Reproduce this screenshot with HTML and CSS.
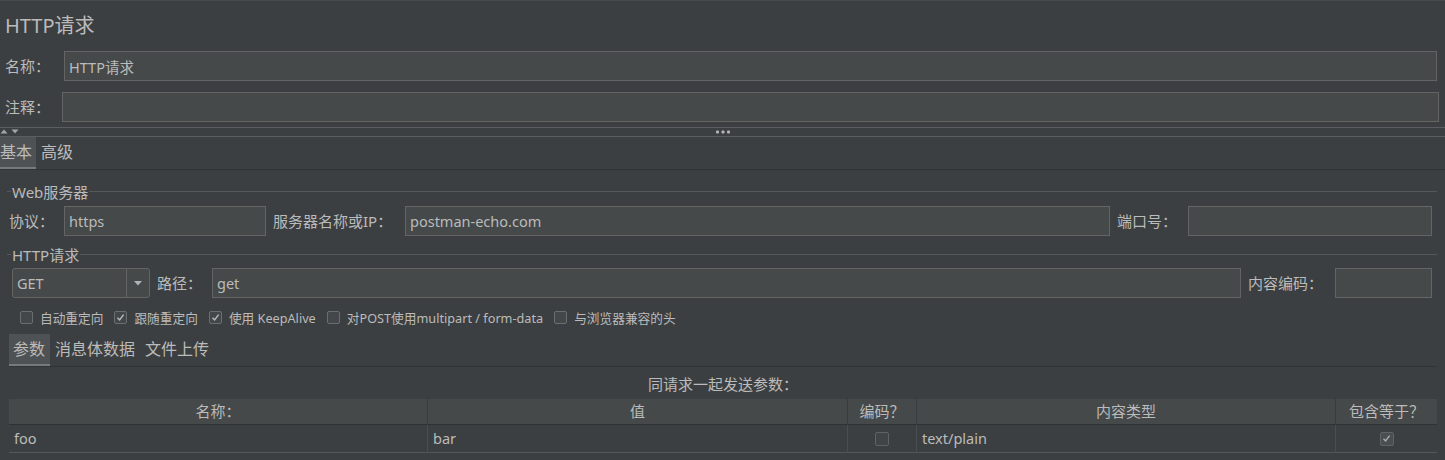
FILE: index.html
```html
<!DOCTYPE html>
<html lang="zh-CN">
<head>
<meta charset="utf-8">
<title>HTTP请求</title>
<link rel="stylesheet" href="styles.css">
</head>
<body>
<div class="app">
  <div class="title">HTTP请求</div>

  <div class="row row-name">
    <label class="lbl lbl-name">名称：</label>
    <input class="field" type="text" value="HTTP请求">
  </div>
  <div class="row row-comment">
    <label class="lbl lbl-comment">注释：</label>
    <input class="field" type="text" value="">
  </div>

  <div class="splitter">
    <svg class="split-arrows" width="20" height="8" viewBox="0 0 20 8">
      <polygon points="0.5,5.5 7.5,5.5 4,1.5" fill="#a3a6a8"/>
      <polygon points="11.5,1.5 18.5,1.5 15,5.5" fill="#a3a6a8"/>
    </svg>
    <svg class="split-dots" width="14" height="4" viewBox="0 0 14 4">
      <rect x="0" y="0.5" width="3" height="3" rx="1" fill="#b4b6b8"/>
      <rect x="5.5" y="0.5" width="3" height="3" rx="1" fill="#b4b6b8"/>
      <rect x="11" y="0.5" width="3" height="3" rx="1" fill="#b4b6b8"/>
    </svg>
    <span></span>
  </div>

  <div class="tabs tabs-main">
    <div class="tab active">基本</div>
    <div class="tab">高级</div>
  </div>

  <div class="group">
    <div class="group-title"><span>Web服务器</span></div>
    <div class="grid-row server-row">
      <label class="lbl">协议：</label>
      <input class="field" type="text" value="https">
      <label class="lbl lbl-pad">服务器名称或IP：</label>
      <input class="field" type="text" value="postman-echo.com">
      <label class="lbl lbl-pad">端口号：</label>
      <input class="field" type="text" value="">
    </div>

    <div class="group-title group-title-2"><span>HTTP请求</span></div>
    <div class="grid-row request-row">
      <div class="combo">
        <span class="combo-value">GET</span>
        <span class="combo-btn">
          <svg width="8" height="5" viewBox="0 0 8 5"><polygon points="0,0 8,0 4,4.5" fill="#b0b3b5"/></svg>
        </span>
      </div>
      <label class="lbl lbl-pad">路径：</label>
      <input class="field" type="text" value="get">
      <label class="lbl lbl-pad">内容编码：</label>
      <input class="field" type="text" value="">
    </div>

    <div class="checks">
      <div class="check-item"><span class="cb"></span><span>自动重定向</span></div>
      <div class="check-item"><span class="cb checked"><svg width="11" height="11" viewBox="0 0 11 11"><path d="M2.5 5.8 L4.6 8 L8.6 2.6" fill="none" stroke="#b9bbbd" stroke-width="1.4"/></svg></span><span>跟随重定向</span></div>
      <div class="check-item"><span class="cb checked"><svg width="11" height="11" viewBox="0 0 11 11"><path d="M2.5 5.8 L4.6 8 L8.6 2.6" fill="none" stroke="#b9bbbd" stroke-width="1.4"/></svg></span><span>使用 KeepAlive</span></div>
      <div class="check-item"><span class="cb"></span><span>对POST使用multipart / form-data</span></div>
      <div class="check-item"><span class="cb"></span><span>与浏览器兼容的头</span></div>
    </div>
  </div>

  <div class="params">
    <div class="tabs tabs-sub">
      <div class="tab active">参数</div>
      <div class="tab">消息体数据</div>
      <div class="tab">文件上传</div>
    </div>
    <div class="caption">同请求一起发送参数：</div>
    <div class="table">
      <div class="th">名称：</div>
      <div class="th">值</div>
      <div class="th">编码？</div>
      <div class="th">内容类型</div>
      <div class="th">包含等于？</div>

      <div class="td">foo</div>
      <div class="td">bar</div>
      <div class="td td-center"><span class="cb cb-table"></span></div>
      <div class="td">text/plain</div>
      <div class="td td-center"><span class="cb cb-table checked"><svg width="11" height="11" viewBox="0 0 11 11"><path d="M2.5 5.8 L4.6 8 L8.6 2.6" fill="none" stroke="#a8abad" stroke-width="1.4"/></svg></span></div>
    </div>
  </div>
</div>
</body>
</html>
```

FILE: styles.css
```css
* { box-sizing: border-box; }

body {
  margin: 0;
  background: #3c3f41;
  color: #bbbbbb;
  font-family: "Noto Sans", "Noto Sans CJK SC", sans-serif;
  font-size: 15px;
  overflow: hidden;
}

.app {
  border-top: 1px solid #47494b;
}

.title {
  height: 50px;
  line-height: 50px;
  padding-left: 5px;
  font-size: 20px;
}

.row {
  display: flex;
  align-items: center;
  height: 30px;
}

.row-name { padding: 0 8px 0 5px; }
.row-comment { margin-top: 11px; padding: 0 6px 0 5px; }

.lbl {
  font-size: 15px;
  white-space: nowrap;
  line-height: 30px;
}

.lbl-name { width: 59px; flex: none; }
.lbl-comment { width: 57px; flex: none; }
.lbl-pad { padding-left: 7px; }

.field {
  flex: 1;
  min-width: 0;
  height: 30px;
  margin: 0;
  border: 1px solid #646464;
  background: #45494a;
  color: #bbbbbb;
  font-family: "Noto Sans", "Noto Sans CJK SC", sans-serif;
  font-size: 14.5px;
  padding: 0 4px;
  outline: none;
}

.splitter {
  margin-top: 5px;
  height: 10px;
  border-top: 1px solid #5b5e60;
  border-bottom: 1px solid #5b5e60;
  display: grid;
  grid-template-columns: 1fr auto 1fr;
  align-items: center;
}

.split-arrows { display: block; }
.split-dots { display: block; }

.tabs {
  display: flex;
  border-bottom: 1px solid #313335;
}

.tab {
  height: 32px;
  line-height: 31px;
  font-size: 16px;
  padding: 0 4px 0 5px;
  border-bottom: 2px solid transparent;
  white-space: nowrap;
}

.tab.active {
  background: #4e5254;
  border-bottom-color: #747a7f;
}

.tabs-main .tab:first-child { padding-left: 0; }

.group {
  margin: 11px 8px 0 7px;
}

.group-title {
  display: flex;
  align-items: center;
  height: 20px;
  font-size: 15px;
}

.group-title::before {
  content: "";
  width: 4px;
  height: 1px;
  background: #555759;
  margin-right: 1px;
}

.group-title::after {
  content: "";
  flex: 1;
  height: 1px;
  background: #555759;
  margin-left: 1px;
}

.group-title-2 { margin-top: 8px; }

.grid-row {
  display: grid;
  align-items: center;
  height: 30px;
  padding: 0 5px 0 2px;
}

.server-row {
  margin-top: 5px;
  grid-template-columns: 55px 202px 139px 1fr 78px 244px;
}

.request-row {
  margin-top: 4px;
  grid-template-columns: 141px 62px 1fr 94px 97px;
}

.grid-row .field { width: 100%; }

.combo {
  margin-left: 3px;
  height: 30px;
  display: flex;
  border: 1px solid #646464;
  border-radius: 3px;
  background: #45494a;
}

.combo-value {
  flex: 1;
  line-height: 28px;
  padding-left: 4px;
  font-size: 14.5px;
}

.combo-btn {
  width: 23px;
  border-left: 1px solid #646464;
  display: flex;
  align-items: center;
  justify-content: center;
}

.combo-btn svg { display: block; }

.checks {
  margin-top: 10px;
  height: 18px;
  display: flex;
  align-items: center;
  gap: 11px;
  padding-left: 13px;
  font-size: 12.7px;
}

.check-item {
  display: flex;
  align-items: center;
  gap: 7px;
  white-space: nowrap;
}

.cb {
  width: 13px;
  height: 13px;
  flex: none;
  border: 1px solid #6b6e70;
  border-radius: 2px;
  background: #43474a;
  display: flex;
  align-items: center;
  justify-content: center;
}

.cb svg { display: block; }

.params {
  margin: 8px 8px 0 9px;
}

.tabs-sub .tab { padding: 0 5px 0 4px; }
.tabs-sub .tab + .tab { padding-left: 5px; }

.caption {
  margin-top: 7px;
  height: 20px;
  line-height: 20px;
  text-align: center;
  font-size: 15px;
}

.table {
  margin-top: 5px;
  display: grid;
  grid-template-columns: 418px 420px 69px 419px 102px;
}

.th {
  height: 26px;
  line-height: 25px;
  background: #45494a;
  border-bottom: 1px solid #2f3133;
  border-left: 1px solid #393c3e;
  text-align: center;
  font-size: 15px;
  white-space: nowrap;
}

.th:first-child { border-left: none; }

.td {
  height: 28px;
  line-height: 27px;
  border-bottom: 1px solid #555759;
  border-left: 1px solid #4b4e50;
  padding-left: 5px;
  font-size: 14.5px;
}

.td:nth-child(6) { border-left: none; }

.td-center {
  display: flex;
  align-items: center;
  justify-content: center;
  padding-left: 0;
}

.cb-table {
  width: 14px;
  height: 14px;
  background: #404446;
  border-color: #606366;
}

.cb-table.checked { background: #4a4e50; }
```
